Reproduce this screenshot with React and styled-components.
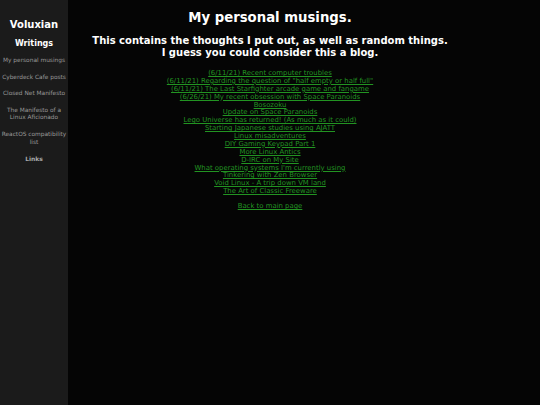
import React from "react";
import styled, { createGlobalStyle } from "styled-components";

const Global = createGlobalStyle`
  html, body { margin: 0; padding: 0; background: #050505; }
  body { font-family: "DejaVu Sans", Verdana, sans-serif; }
`;

const Page = styled.div`
  display: flex;
  min-height: 405px;
  background: #050505;
`;

const Sidebar = styled.nav`
  width: 68px;
  flex-shrink: 0;
  background: #1b1b1b;
  display: flex;
  flex-direction: column;
  align-items: center;
  text-align: center;
  padding-top: 19px;
`;

const Brand = styled.div`
  color: #fff;
  font-weight: bold;
  font-size: 10px;
  line-height: 12px;
`;

const SideHeading = styled.div`
  color: ${(p) => p.$color || "#fff"};
  font-weight: bold;
  font-size: ${(p) => p.$size || 8}px;
  line-height: 10px;
  margin-top: ${(p) => p.$mt || 8}px;
`;

const SideLink = styled.a`
  color: #9a9a9a;
  font-size: 5.85px;
  line-height: 7.6px;
  text-decoration: none;
  margin-top: ${(p) => p.$mt || 9}px;
  padding: 0;
`;

const Main = styled.main`
  flex: 1;
  display: flex;
  flex-direction: column;
  align-items: center;
  text-align: center;
  color: #fff;
  padding: 10px 68px 0 0;
`;

const Title = styled.h1`
  margin: 0;
  font-size: 13.25px;
  line-height: 16px;
  font-weight: bold;
`;

const Subtitle = styled.h2`
  margin: 9px 0 0;
  font-size: 10px;
  line-height: 12px;
  font-weight: bold;
`;

const LinkList = styled.div`
  margin-top: 11px;
  display: flex;
  flex-direction: column;
  align-items: center;
`;

const PostLink = styled.a`
  color: #229422;
  font-size: 6.9px;
  line-height: 7.87px;
  text-decoration: underline;
  margin-top: ${(p) => p.$mt || 0}px;
`;

const posts = [
  "(6/11/21) Recent computer troubles",
  '(6/11/21) Regarding the question of "half empty or half full"',
  "(6/11/21) The Last Starfighter arcade game and fangame",
  "(6/26/21) My recent obsession with Space Paranoids",
  "Bosozoku",
  "Update on Space Paranoids",
  "Lego Universe has returned! (As much as it could)",
  "Starting Japanese studies using AJATT",
  "Linux misadventures",
  "DIY Gaming Keypad Part 1",
  "More Linux Antics",
  "D-IRC on My Site",
  "What operating systems I'm currently using",
  "Tinkering with Zen Browser",
  "Void Linux - A trip down VM land",
  "The Art of Classic Freeware",
];

export default function App() {
  return (
    <Page>
      <Global />
      <Sidebar>
        <Brand>Voluxian</Brand>
        <SideHeading $mt={8}>Writings</SideHeading>
        <SideLink $mt={8}>My personal musings</SideLink>
        <SideLink>Cyberdeck Cafe posts</SideLink>
        <SideLink>Closed Net Manifesto</SideLink>
        <SideLink>The Manifesto of a Linux Aficionado</SideLink>
        <SideLink>ReactOS compatibility list</SideLink>
        <SideHeading $mt={8} $color="#aaa" $size={6}>Links</SideHeading>
      </Sidebar>
      <Main>
        <Title>My personal musings.</Title>
        <Subtitle>
          This contains the thoughts I put out, as well as random things.
          <br />I guess you could consider this a blog.
        </Subtitle>
        <LinkList>
          {posts.map((p) => (
            <PostLink key={p} href="#">{p}</PostLink>
          ))}
          <PostLink href="#" $mt={7}>Back to main page</PostLink>
        </LinkList>
      </Main>
    </Page>
  );
}
